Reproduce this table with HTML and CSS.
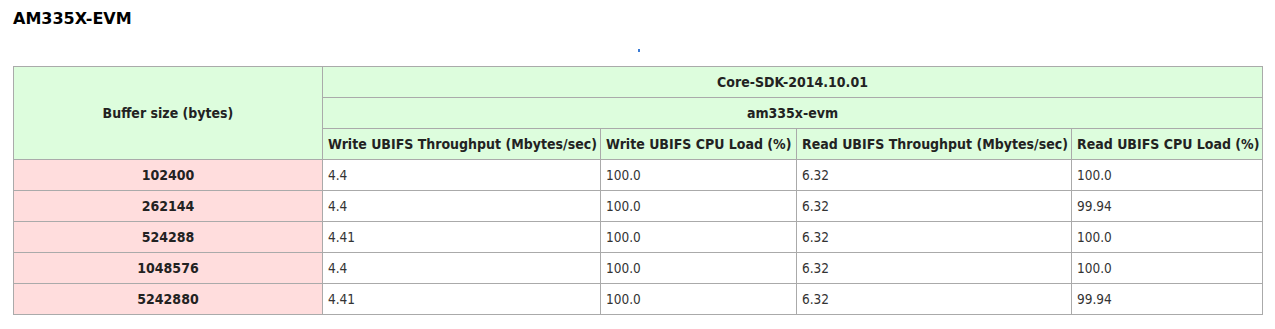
FILE: index.html
```html
<!DOCTYPE html>
<html>
<head>
<meta charset="utf-8">
<link rel="stylesheet" href="styles.css">
</head>
<body>
<h2 class="title">AM335X-EVM</h2>
<div class="marker-row"><span class="marker"></span></div>
<table class="perf">
  <colgroup>
    <col class="c1"><col class="c2"><col class="c3"><col class="c4"><col class="c5">
  </colgroup>
  <thead>
    <tr><th class="hd" rowspan="3">Buffer size (bytes)</th><th class="hd" colspan="4">Core-SDK-2014.10.01</th></tr>
    <tr><th class="hd" colspan="4">am335x-evm</th></tr>
    <tr>
      <th class="hd">Write UBIFS Throughput (Mbytes/sec)</th>
      <th class="hd">Write UBIFS CPU Load (%)</th>
      <th class="hd">Read UBIFS Throughput (Mbytes/sec)</th>
      <th class="hd">Read UBIFS CPU Load (%)</th>
    </tr>
  </thead>
  <tbody>
    <tr><th class="rh">102400</th><td>4.4</td><td>100.0</td><td>6.32</td><td>100.0</td></tr>
    <tr><th class="rh">262144</th><td>4.4</td><td>100.0</td><td>6.32</td><td>99.94</td></tr>
    <tr><th class="rh">524288</th><td>4.41</td><td>100.0</td><td>6.32</td><td>100.0</td></tr>
    <tr><th class="rh">1048576</th><td>4.4</td><td>100.0</td><td>6.32</td><td>100.0</td></tr>
    <tr><th class="rh">5242880</th><td>4.41</td><td>100.0</td><td>6.32</td><td>99.94</td></tr>
  </tbody>
</table>
</body>
</html>
```

FILE: styles.css
```css
html, body {
  margin: 0;
  padding: 0;
  background: #fff;
}
body {
  padding: 0 13px;
  font-family: "DejaVu Sans Condensed", "DejaVu Sans", sans-serif;
  font-size: 13.5px;
  color: #222;
}
.title {
  margin: 0;
  padding-top: 8px;
  height: 22px;
  font-family: "DejaVu Sans", sans-serif;
  font-size: 16px;
  font-weight: bold;
  color: #000;
  line-height: 21px;
}
.marker-row {
  height: 36px;
  display: flex;
  justify-content: center;
  align-items: flex-start;
  padding-top: 19px;
  box-sizing: border-box;
}
.marker {
  display: block;
  width: 2px;
  height: 3px;
  background: #3a7bd5;
  margin-left: 2px;
}
.perf {
  border-collapse: collapse;
  width: 1249px;
  table-layout: fixed;
}
.c1 { width: 309px; }
.c2 { width: 278px; }
.c3 { width: 196px; }
.c4 { width: 275px; }
.c5 { width: 191px; }
.perf th, .perf td {
  border: 1px solid #aaa;
  height: 31px;
  padding: 0 5px;
  box-sizing: border-box;
  white-space: nowrap;
}
.perf th {
  font-weight: bold;
  font-size: 14px;
  text-align: center;
}
.perf .hd {
  background: #ddfddd;
}
.perf .rh {
  background: #ffdddd;
}
.perf td {
  text-align: left;
  color: #333;
}
```
